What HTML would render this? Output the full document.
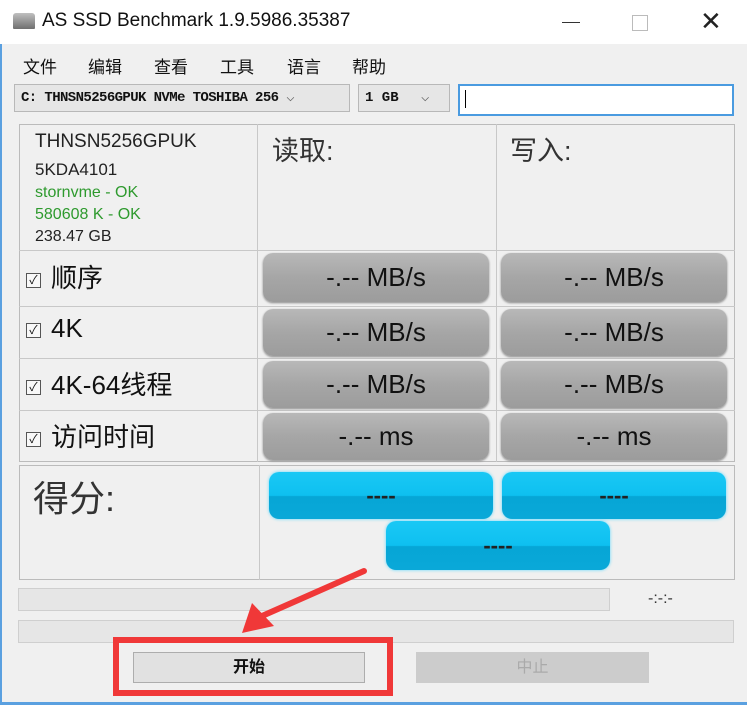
<!DOCTYPE html>
<html><head><meta charset="utf-8"><style>
*{margin:0;padding:0;box-sizing:border-box}
body{width:747px;height:705px;background:#f0f0f0;position:relative;overflow:hidden;font-family:"Liberation Sans","Noto Sans CJK SC",sans-serif;color:#111}
.a{position:absolute}
.title{left:0;top:0;width:747px;height:44px;background:#fff}
.gb{background:linear-gradient(#b8b8b8,#a6a6a6 50%,#9c9c9c);border-radius:10px;font-size:26px;text-align:center;color:#111;box-shadow:0 1px 2px #888}
.bb{background:linear-gradient(#1ac8f5,#0ec0f0 50%,#06a6d6 52%,#0aa8d8);border-radius:10px;font-size:22px;font-weight:bold;text-align:center;color:#222;box-shadow:0 0 3px #5cd8ff}
.cell{border:1px solid #c8c8c8}
.lbl{font-size:26px;left:26px}
.cb{display:inline-block;width:15px;height:15px;border:1px solid #555;font-size:12px;line-height:13px;text-align:center;vertical-align:middle;margin-right:10px;background:#f8f8f8}
</style></head><body>
<div class="a" style="left:0;top:0;width:2px;height:705px;background:#5aa0e0"></div>
<div class="a" style="left:0;top:702px;width:747px;height:3px;background:#5aa0e0"></div>
<div class="a title"></div>
<div class="a" style="left:13px;top:13px;width:22px;height:16px;background:linear-gradient(#c0c0c0,#707070);border-radius:3px 3px 1px 1px"></div>
<div class="a" style="left:42px;top:10px;font-size:19px;color:#111">AS SSD Benchmark 1.9.5986.35387</div>
<div class="a" style="left:562px;top:22px;width:18px;height:1px;background:#333"></div>
<div class="a" style="left:632px;top:15px;width:16px;height:16px;border:1px solid #bbb"></div>
<div class="a" style="left:700px;top:6px;font-size:26px;color:#222">✕</div>
<div class="a" style="left:23px;top:53px;font-size:17px;word-spacing:0">文件</div>
<div class="a" style="left:88px;top:53px;font-size:17px">编辑</div>
<div class="a" style="left:154px;top:53px;font-size:17px">查看</div>
<div class="a" style="left:220px;top:53px;font-size:17px">工具</div>
<div class="a" style="left:287px;top:53px;font-size:17px">语言</div>
<div class="a" style="left:352px;top:53px;font-size:17px">帮助</div>
<div class="a" style="left:14px;top:84px;width:336px;height:28px;background:#e6e6e6;border:1px solid #b8b8b8;font-family:'Liberation Mono',monospace;font-size:14px;line-height:26px;padding-left:6px;font-weight:bold;letter-spacing:-0.6px">C: THNSN5256GPUK NVMe TOSHIBA 256 <span style="font-weight:normal;color:#666">⌵</span></div>
<div class="a" style="left:358px;top:84px;width:92px;height:28px;background:#e6e6e6;border:1px solid #b8b8b8;font-family:'Liberation Mono',monospace;font-size:14px;line-height:26px;padding-left:6px;font-weight:bold">1 GB <span style="font-weight:normal;color:#666;margin-left:14px">⌵</span></div>
<div class="a" style="left:458px;top:84px;width:276px;height:32px;background:#fff;border:2px solid #4a9be0"></div>
<div class="a" style="left:465px;top:90px;width:1px;height:18px;background:#000"></div>

<div class="a" style="left:19px;top:124px;width:716px;height:338px;border:1px solid #bbb"></div>
<div class="a" style="left:257px;top:124px;width:1px;height:338px;background:#c8c8c8"></div>
<div class="a" style="left:496px;top:124px;width:1px;height:338px;background:#c8c8c8"></div>
<div class="a" style="left:19px;top:250px;width:716px;height:1px;background:#c8c8c8"></div>
<div class="a" style="left:19px;top:306px;width:716px;height:1px;background:#c8c8c8"></div>
<div class="a" style="left:19px;top:358px;width:716px;height:1px;background:#c8c8c8"></div>
<div class="a" style="left:19px;top:410px;width:716px;height:1px;background:#c8c8c8"></div>

<div class="a" style="left:35px;top:131px;font-size:19px;color:#222">THNSN5256GPUK</div>
<div class="a" style="left:35px;top:160px;font-size:17px;color:#222">5KDA4101</div>
<div class="a" style="left:35px;top:184px;font-size:16px;color:#2e9a2e">stornvme - OK</div>
<div class="a" style="left:35px;top:206px;font-size:16px;color:#2e9a2e">580608 K - OK</div>
<div class="a" style="left:35px;top:228px;font-size:16px;color:#222">238.47 GB</div>
<div class="a" style="left:272px;top:129px;font-size:27px;color:#333">读取:</div>
<div class="a" style="left:510px;top:129px;font-size:27px;color:#333">写入:</div>

<div class="a lbl" style="top:258px"><span class="cb">✓</span>顺序</div>
<div class="a lbl" style="top:313px"><span class="cb">✓</span>4K</div>
<div class="a lbl" style="top:365px"><span class="cb">✓</span>4K-64线程</div>
<div class="a lbl" style="top:417px"><span class="cb">✓</span>访问时间</div>

<div class="a gb" style="left:263px;top:253px;width:226px;height:49px;line-height:49px">-.-- MB/s</div>
<div class="a gb" style="left:501px;top:253px;width:226px;height:49px;line-height:49px">-.-- MB/s</div>
<div class="a gb" style="left:263px;top:309px;width:226px;height:47px;line-height:47px">-.-- MB/s</div>
<div class="a gb" style="left:501px;top:309px;width:226px;height:47px;line-height:47px">-.-- MB/s</div>
<div class="a gb" style="left:263px;top:361px;width:226px;height:47px;line-height:47px">-.-- MB/s</div>
<div class="a gb" style="left:501px;top:361px;width:226px;height:47px;line-height:47px">-.-- MB/s</div>
<div class="a gb" style="left:263px;top:413px;width:226px;height:47px;line-height:47px">-.-- ms</div>
<div class="a gb" style="left:501px;top:413px;width:226px;height:47px;line-height:47px">-.-- ms</div>

<div class="a" style="left:19px;top:465px;width:716px;height:115px;border:1px solid #bbb"></div>
<div class="a" style="left:259px;top:465px;width:1px;height:115px;background:#c8c8c8"></div>
<div class="a" style="left:33px;top:470px;font-size:36px;color:#333">得分:</div>
<div class="a bb" style="left:269px;top:472px;width:224px;height:47px;line-height:47px">----</div>
<div class="a bb" style="left:502px;top:472px;width:224px;height:47px;line-height:47px">----</div>
<div class="a bb" style="left:386px;top:521px;width:224px;height:49px;line-height:49px">----</div>

<div class="a" style="left:18px;top:588px;width:592px;height:23px;background:#e6e6e6;border:1px solid #cfcfcf"></div>
<div class="a" style="left:648px;top:590px;font-size:16px;color:#333">-:-:-</div>
<div class="a" style="left:18px;top:620px;width:716px;height:23px;background:#e6e6e6;border:1px solid #cfcfcf"></div>

<div class="a" style="left:113px;top:637px;width:280px;height:59px;border:6px solid #f03838"></div>
<div class="a" style="left:133px;top:652px;width:232px;height:31px;background:#e1e1e1;border:1px solid #adadad;text-align:center;line-height:29px;font-size:16px;font-weight:bold">开始</div>
<div class="a" style="left:416px;top:652px;width:233px;height:31px;background:#cccccc;text-align:center;line-height:31px;font-size:16px;color:#aaa">中止</div>

<svg class="a" style="left:0;top:0" width="747" height="705">
<path d="M364 571 L262 616" stroke="#f03838" stroke-width="6" stroke-linecap="round"/>
<path d="M242 633 L252 603 L274 626 Z" fill="#f03838"/>
</svg>
</body></html>
